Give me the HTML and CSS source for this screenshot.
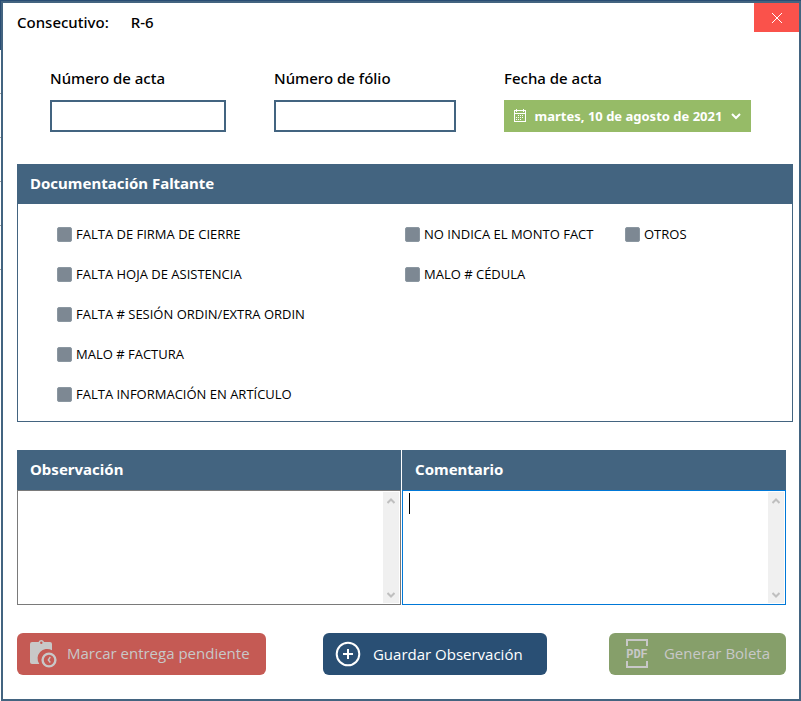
FILE: index.html
```html
<!DOCTYPE html>
<html lang="es">
<head>
<meta charset="utf-8">
<meta name="viewport" content="width=device-width, initial-scale=1">
<title>Consecutivo R-6</title>
<link rel="stylesheet" href="styles.css">
</head>
<body>
<div class="backdrop"></div>
<main class="window">
  <header class="titlebar">
    <h1 class="title"><span>Consecutivo:</span><span>R-6</span></h1>
    <button class="close" type="button" aria-label="Cerrar">
      <svg width="12" height="12" viewBox="0 0 12 12" fill="none" stroke="#fff" stroke-width="1"><path d="M1 1l10 10M11 1L1 11"/></svg>
    </button>
  </header>
  <form class="form">
    <div class="fields">
      <div class="field">
        <label for="acta">Número de acta</label>
        <input class="box" id="acta" type="text">
      </div>
      <div class="field">
        <label for="folio">Número de fólio</label>
        <input class="box" id="folio" type="text">
      </div>
      <div class="field">
        <label for="fecha">Fecha de acta</label>
        <button class="date" id="fecha" type="button" aria-haspopup="dialog">
          <svg width="12" height="14" viewBox="0 0 12 14" fill="none" stroke="#fff" shape-rendering="crispEdges">
            <path d="M.5 1.5h11v11H.5zM0 4.5h12M2.5 0v3M9.500 0v3"/>
            <path stroke-dasharray="1 1" d="M4 6.500h6M2 8.500h8M2 10.500h6"/>
          </svg>
          <span>martes, 10 de agosto de 2021</span>
          <svg width="10" height="8" viewBox="0 0 10 8" fill="none" stroke="#fff" stroke-width="2"><path d="M1 2l4 4 4-4"/></svg>
        </button>
      </div>
    </div>

    <section class="panel">
      <h2 class="bar">Documentación Faltante</h2>
      <div class="checks">
        <div class="column">
          <label class="check"><input type="checkbox">FALTA DE FIRMA DE CIERRE</label>
          <label class="check"><input type="checkbox">FALTA HOJA DE ASISTENCIA</label>
          <label class="check"><input type="checkbox">FALTA # SESIÓN ORDIN/EXTRA ORDIN</label>
          <label class="check"><input type="checkbox">MALO # FACTURA</label>
          <label class="check"><input type="checkbox">FALTA INFORMACIÓN EN ARTÍCULO</label>
        </div>
        <div class="column">
          <label class="check"><input type="checkbox">NO INDICA EL MONTO FACT</label>
          <label class="check"><input type="checkbox">MALO # CÉDULA</label>
        </div>
        <div class="column">
          <label class="check"><input type="checkbox">OTROS</label>
        </div>
      </div>
    </section>

    <div class="notes">
      <div class="note">
        <label class="bar" for="observacion">Observación</label>
        <div class="editor">
          <textarea id="observacion"></textarea>
          <div class="track">
            <svg width="8" height="6" viewBox="0 0 8 6" fill="none" stroke="#bfbfbf" stroke-width="2"><path d="M.5 5L4 1.500 7.500 5"/></svg>
            <svg width="8" height="6" viewBox="0 0 8 6" fill="none" stroke="#bfbfbf" stroke-width="2"><path d="M.5 1L4 4.500 7.500 1"/></svg>
          </div>
        </div>
      </div>
      <div class="note">
        <label class="bar" for="comentario">Comentario</label>
        <div class="editor editor-active">
          <span class="caret"></span>
          <textarea id="comentario"></textarea>
          <div class="track">
            <svg width="8" height="6" viewBox="0 0 8 6" fill="none" stroke="#bfbfbf" stroke-width="2"><path d="M.5 5L4 1.500 7.500 5"/></svg>
            <svg width="8" height="6" viewBox="0 0 8 6" fill="none" stroke="#bfbfbf" stroke-width="2"><path d="M.5 1L4 4.500 7.500 1"/></svg>
          </div>
        </div>
      </div>
    </div>

    <div class="actions">
      <button class="action pending" type="button" disabled>
        <svg width="28" height="30" viewBox="0 0 28 30">
          <path fill="#c8c8c8" fill-rule="evenodd" d="M2 4h6.500a3 3 0 0 1 5.600 0H20a2 2 0 0 1 2 2v6.200A9.600 9.600 0 0 0 9.300 26H2a2 2 0 0 1-2-2V6a2 2 0 0 1 2-2zM11.300 3.600a1.200 1.200 0 1 0 0 2.400 1.200 1.200 0 0 0 0-2.400z"/>
          <circle cx="19" cy="22" r="6.400" fill="none" stroke="#c8c8c8" stroke-width="2.400"/>
          <path d="M20.300 19L18.300 22l2 2.500" fill="none" stroke="#c8c8c8" stroke-width="1.400"/>
        </svg>
        <span>Marcar entrega pendiente</span>
      </button>
      <button class="action save" type="button">
        <svg width="26" height="26" viewBox="0 0 26 26" fill="none" stroke="#fff"><circle cx="13" cy="13" r="11.300" stroke-width="2"/><path stroke-width="2" d="M13 8v10M8 13h10"/></svg>
        <span>Guardar Observación</span>
      </button>
      <button class="action report" type="button" disabled>
        <svg width="24" height="30" viewBox="0 0 24 30" fill="none" stroke="#c8c8c8" stroke-width="2">
          <path d="M2 8V2h20v6M2 23v6h20v-6"/>
          <text class="pdf" x="12" y="20" text-anchor="middle">PDF</text>
        </svg>
        <span>Generar Boleta</span>
      </button>
    </div>
  </form>
</main>
</body>
</html>
```
FILE: styles.css
```css
* { box-sizing: border-box; }

body {
  margin: 0;
  padding-top: 1px;
  min-height: 100vh;
  display: grid;
  grid-template-columns: 1px 1fr;
  background: #294d74;
  color: #000;
  font-family: "Noto Sans", "Open Sans", sans-serif;
  font-size: 15px;
  line-height: 20px;
}

button, input, textarea { font: inherit; margin: 0; }
button { border: 0; }
svg { display: block; flex: none; }

.backdrop {
  background:
    linear-gradient(#294d74 49px, transparent 49px),
    repeating-linear-gradient(transparent 0 43px, #a0a0a0 43px 44px) 0 49px / 1px 220px no-repeat,
    #fff;
}

.window {
  border: 2px solid #436480;
  background: #fff;
}

.titlebar {
  display: flex;
  justify-content: space-between;
  padding-left: 14px;
}

.title {
  display: flex;
  gap: 22px;
  margin: 0;
  padding-top: 9px;
  font-size: 15px;
  font-weight: 500;
}

.close {
  display: grid;
  place-items: center;
  width: 45px;
  height: 29px;
  padding: 0;
  background: #fa524b;
}

.form { padding: 36px 13px 24px 14px; }

.fields {
  display: grid;
  grid-template-columns: 224fr 230fr 247fr;
  padding: 0 35px 0 33px;
}

.field {
  display: flex;
  flex-direction: column;
  gap: 12px;
  padding-right: 48px;
  font-weight: 500;
}

.field:last-child { padding-right: 0; }

.box {
  width: 100%;
  height: 32px;
  padding: 0 6px;
  border: 2px solid #436480;
  background: #fff;
}

.date {
  display: flex;
  align-items: center;
  justify-content: space-between;
  height: 32px;
  padding: 0 10px;
  background: #96bb67;
  color: #fff;
  font-size: 13px;
  font-weight: 700;
}

.panel {
  margin: 32px -7px 28px 0;
}

.bar {
  display: block;
  margin: 0;
  padding: 9px 13px 11px;
  background: #436480;
  color: #fff;
  font-size: 15px;
  font-weight: 700;
}

.checks {
  display: grid;
  grid-template-columns: 348fr 220fr 167fr;
  padding: 20px 0 17px 39px;
  border: 1px solid #436480;
  border-top: 0;
}

.column {
  display: flex;
  flex-direction: column;
  gap: 20px;
}

.check {
  display: flex;
  align-items: center;
  gap: 4px;
  font-family: "Open Sans", "Noto Sans", sans-serif;
  font-size: 13px;
}

.check input {
  appearance: none;
  width: 15px;
  height: 15px;
  border: 1px solid #8b97a1;
  border-radius: 2px;
  background: #7d8893;
}

.notes {
  display: grid;
  grid-template-columns: 1fr 1fr;
  gap: 1px;
}

.editor {
  position: relative;
  display: flex;
  height: 115px;
  padding: 1px;
  border: 1px solid #7a7a7a;
}

.editor-active { border-color: #0078d7; }

.editor textarea {
  flex: 1;
  min-width: 0;
  padding: 2px 5px;
  border: 0;
  outline: 0;
  resize: none;
  overflow: hidden;
  background: #fff;
}

.track {
  display: flex;
  flex-direction: column;
  justify-content: space-between;
  align-items: center;
  width: 16px;
  padding: 6px 0 5px;
  background: #f0f0f0;
}

.caret {
  position: absolute;
  left: 6px;
  top: 2px;
  width: 1px;
  height: 21px;
  background: #000;
}

.actions {
  display: grid;
  grid-template-columns: 306fr 286fr 177fr;
  justify-items: start;
  margin-top: 28px;
}

.action {
  display: flex;
  align-items: center;
  height: 42px;
  padding: 0 16px 2px 13px;
  border-radius: 6px;
  font-family: "Open Sans", "Noto Sans", sans-serif;
  font-size: 15px;
  white-space: nowrap;
}

.pending { gap: 9px; background: #c55a54; color: #c8c8c8; }
.save { gap: 12px; padding: 0 24px 0 12px; background: #294f74; color: #fff; }
.report { gap: 15px; padding-left: 16px; background: #869f6a; color: #c8c8c8; }

.pdf {
  fill: #c8c8c8;
  stroke: none;
  font-family: "Liberation Mono", monospace;
  font-size: 12px;
  font-weight: 700;
}
```
